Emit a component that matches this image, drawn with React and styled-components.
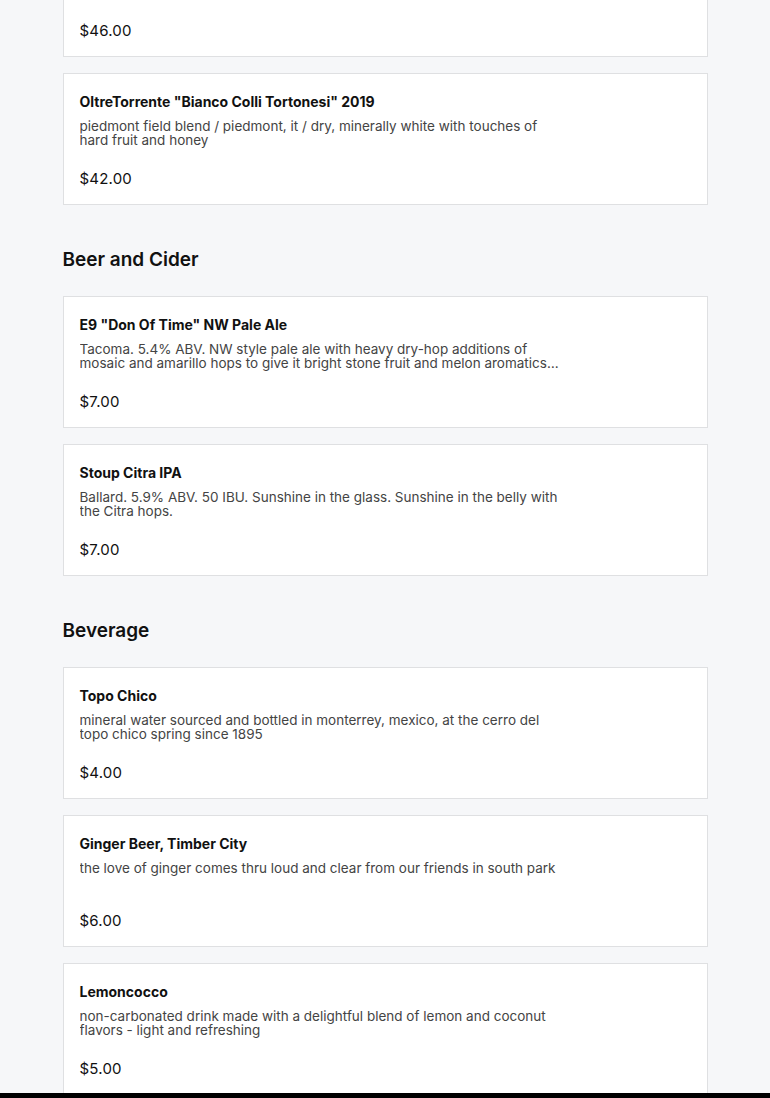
import React from "react";
import styled, { createGlobalStyle } from "styled-components";

const GlobalStyle = createGlobalStyle`
  html, body {
    margin: 0;
    padding: 0;
    background: #f6f7f9;
    font-family: Inter, "Noto Sans", "Liberation Sans", sans-serif;
    color: #111;
  }
`;

const menu = [
  {
    items: [
      {
        name: 'Domaine de la Pépière "Clos des Briords" 2020',
        desc: "melon de bourgogne / loire, fr / dry, saline and bright with citrus and stone",
        price: "$46.00",
      },
      {
        name: 'OltreTorrente "Bianco Colli Tortonesi" 2019',
        desc: "piedmont field blend / piedmont, it / dry, minerally white with touches of hard fruit and honey",
        price: "$42.00",
      },
    ],
  },
  {
    title: "Beer and Cider",
    items: [
      {
        name: 'E9 "Don Of Time" NW Pale Ale',
        desc: "Tacoma. 5.4% ABV. NW style pale ale with heavy dry-hop additions of mosaic and amarillo hops to give it bright stone fruit and melon aromatics with a crisp, clean finish.",
        price: "$7.00",
      },
      {
        name: "Stoup Citra IPA",
        desc: "Ballard. 5.9% ABV. 50 IBU. Sunshine in the glass. Sunshine in the belly with the Citra hops.",
        price: "$7.00",
      },
    ],
  },
  {
    title: "Beverage",
    items: [
      {
        name: "Topo Chico",
        desc: "mineral water sourced and bottled in monterrey, mexico, at the cerro del topo chico spring since 1895",
        price: "$4.00",
      },
      {
        name: "Ginger Beer, Timber City",
        desc: "the love of ginger comes thru loud and clear from our friends in south park",
        price: "$6.00",
      },
      {
        name: "Lemoncocco",
        desc: "non-carbonated drink made with a delightful blend of lemon and coconut flavors - light and refreshing",
        price: "$5.00",
      },
    ],
  },
];

function App() {
  return (
    <>
      <GlobalStyle />
      <Page>
        {menu.map((section, i) => (
          <Section key={i}>
            {section.title && <SectionTitle>{section.title}</SectionTitle>}
            <List>
              {section.items.map((item) => (
                <Card key={item.name}>
                  <ItemName>{item.name}</ItemName>
                  <DescBox>
                    <ItemDesc>{item.desc}</ItemDesc>
                  </DescBox>
                  <Price>{item.price}</Price>
                </Card>
              ))}
            </List>
          </Section>
        ))}
      </Page>
      <BottomBar />
    </>
  );
}

export default App;

const Page = styled.main`
  max-width: 645px;
  margin: -75px auto 0;
  padding-bottom: 40px;
`;

const Section = styled.section`
  & + & {
    margin-top: 41px;
  }
`;

const SectionTitle = styled.h2`
  margin: 0 0 22px;
  font-size: 19px;
  line-height: 28px;
  font-weight: 600;
  color: #111;
`;

const List = styled.div`
  display: flex;
  flex-direction: column;
  gap: 16px;
`;

const Card = styled.article`
  background: #fff;
  border: 1px solid #dfe0e2;
  padding: 18px 16px 15px;
  display: flex;
  flex-direction: column;
`;

const ItemName = styled.h3`
  margin: 0;
  font-size: 14px;
  line-height: 20px;
  font-weight: 700;
  color: #111;
`;

const DescBox = styled.div`
  margin-top: 7px;
  height: 28px;
  max-width: 482px;
`;

const ItemDesc = styled.p`
  margin: 0;
  padding-bottom: 1px;
  font-size: 13.5px;
  line-height: 14px;
  color: #444;
  overflow: hidden;
  text-overflow: ellipsis;
  display: -webkit-box;
  -webkit-line-clamp: 2;
  -webkit-box-orient: vertical;
`;

const Price = styled.div`
  margin-top: 22px;
  font-size: 15px;
  line-height: 20px;
  letter-spacing: 0.2px;
  color: #111;
`;

const BottomBar = styled.div`
  position: fixed;
  left: 0;
  right: 0;
  bottom: 0;
  height: 5px;
  background: #000;
`;
